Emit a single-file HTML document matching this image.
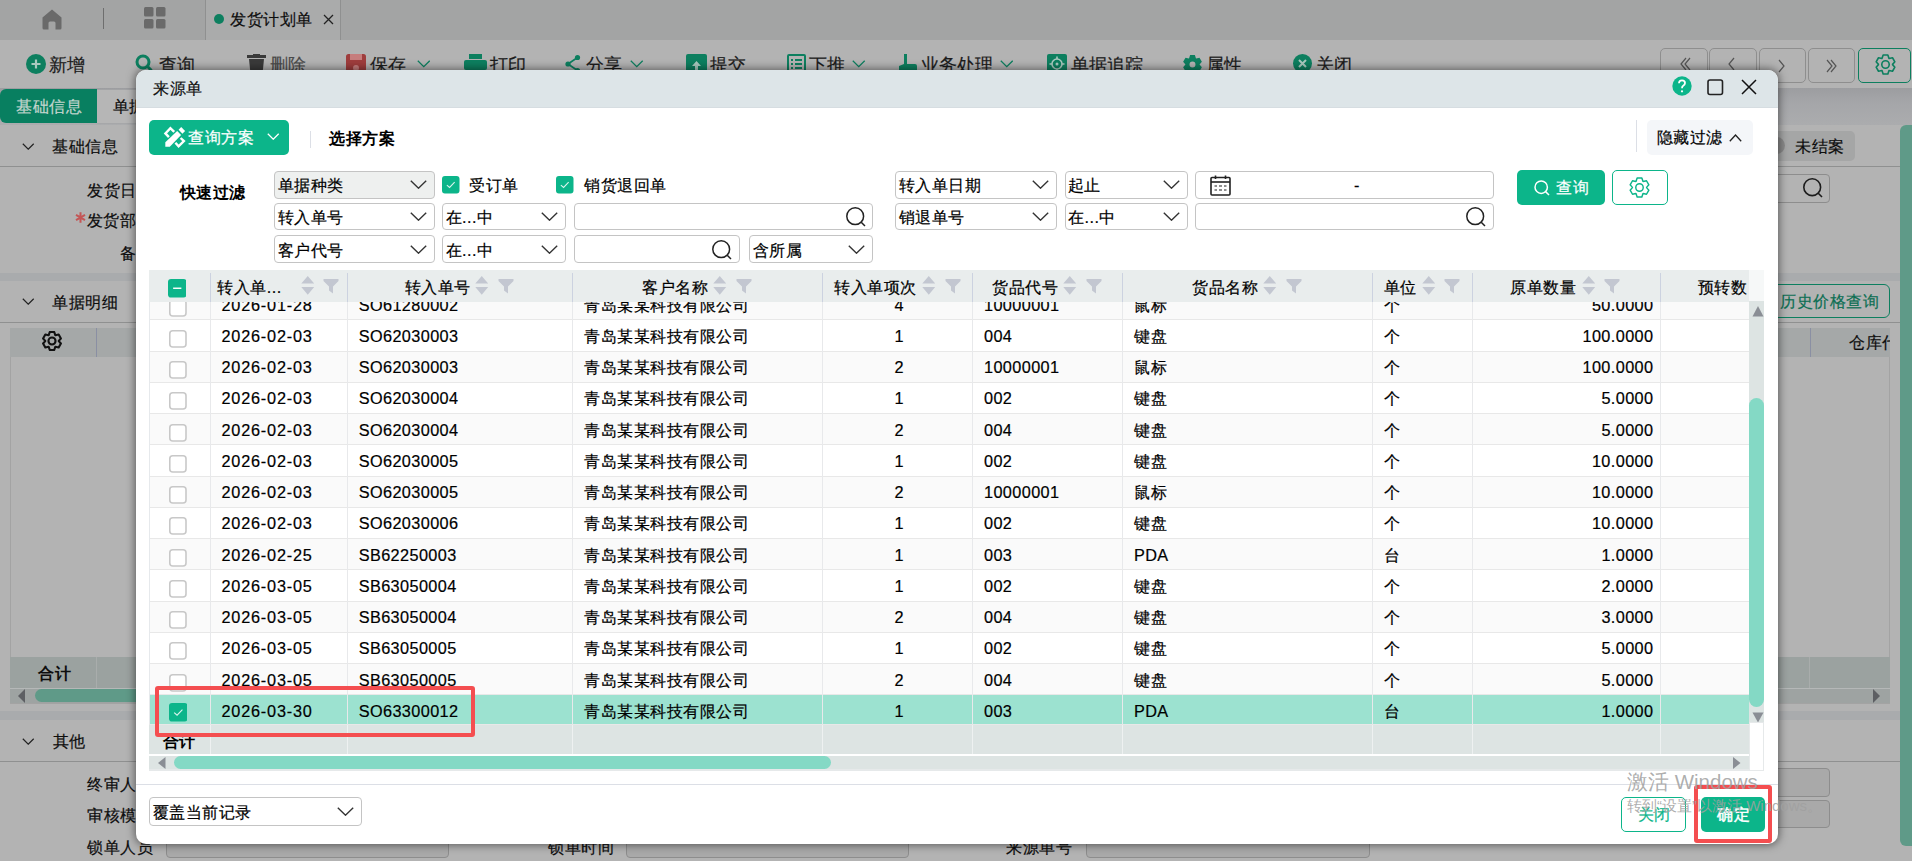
<!DOCTYPE html><html><head><meta charset="utf-8"><style>
html,body{margin:0;padding:0;}
body{width:1912px;height:861px;overflow:hidden;position:relative;background:#b3b3b3;font-family:"Liberation Sans",sans-serif;color:#000;}
.t{position:absolute;white-space:nowrap;font-size:16.25px;letter-spacing:0.5px;-webkit-text-stroke:0.2px currentColor;}
.bg .t{color:#0e0e0e;}
</style></head><body>
<div class="bg">
<div style="position:absolute;left:0px;top:0px;width:1912px;height:40px;background:#a3a4a4;"></div>
<div style="position:absolute;left:205px;top:0px;width:136px;height:40px;background:#aaabab;border-left:1px solid #8f9090;border-right:1px solid #8f9090;box-sizing:border-box;"></div>
<svg width="20" height="21" viewBox="0 0 20 21" style="position:absolute;left:42px;top:9px"><path d="M10 0.5 L19.5 8.5 L19.5 19 Q19.5 20.5 18 20.5 L13.5 20.5 L13.5 14 Q13.5 12.5 12 12.5 L8 12.5 Q6.5 12.5 6.5 14 L6.5 20.5 L2 20.5 Q0.5 20.5 0.5 19 L0.5 8.5Z" fill="#6a6a6a"/></svg>
<div style="position:absolute;left:102.5px;top:8px;width:1.2px;height:21px;background:#6e6e6e;"></div>
<svg width="22" height="22" viewBox="0 0 22 22" style="position:absolute;left:144px;top:7px"><rect x="0" y="0" width="9.5" height="9.5" rx="1.5" fill="#6a6a6a"/><rect x="12" y="0" width="9.5" height="9.5" rx="1.5" fill="#6a6a6a"/><rect x="0" y="12" width="9.5" height="9.5" rx="1.5" fill="#6a6a6a"/><rect x="12" y="12" width="9.5" height="9.5" rx="1.5" fill="#6a6a6a"/></svg>
<div style="position:absolute;left:214px;top:14px;width:10px;height:10px;border-radius:50%;background:#0d7f5f;"></div>
<div class="t" style="left:230px;top:8px;font-size:16.25px;line-height:22px;">发货计划单</div>
<svg width="11" height="11" viewBox="0 0 11 11" style="position:absolute;left:323px;top:14px"><path d="M1 1 L10 10 M10 1 L1 10" stroke="#222" stroke-width="1.3"/></svg>
<div style="position:absolute;left:0px;top:40px;width:1912px;height:48px;background:#b3b3b3;"></div>
<div class="t" style="left:48.5px;top:53.5px;font-size:17.5px;line-height:22px;letter-spacing:0;color:#1c1c1c;">新增</div>
<div class="t" style="left:158.5px;top:53.5px;font-size:17.5px;line-height:22px;letter-spacing:0;color:#1c1c1c;">查询</div>
<div class="t" style="left:269.5px;top:53.5px;font-size:17.5px;line-height:22px;letter-spacing:0;color:#4a4a4a;">删除</div>
<div class="t" style="left:369.5px;top:53.5px;font-size:17.5px;line-height:22px;letter-spacing:0;color:#1c1c1c;">保存</div>
<div class="t" style="left:490.0px;top:53.5px;font-size:17.5px;line-height:22px;letter-spacing:0;color:#1c1c1c;">打印</div>
<div class="t" style="left:586.0px;top:53.5px;font-size:17.5px;line-height:22px;letter-spacing:0;color:#1c1c1c;">分享</div>
<div class="t" style="left:709.5px;top:53.5px;font-size:17.5px;line-height:22px;letter-spacing:0;color:#1c1c1c;">提交</div>
<div class="t" style="left:809.0px;top:53.5px;font-size:17.5px;line-height:22px;letter-spacing:0;color:#1c1c1c;">下推</div>
<div class="t" style="left:921.0px;top:53.5px;font-size:17.5px;line-height:22px;letter-spacing:0;color:#1c1c1c;">业务处理</div>
<div class="t" style="left:1070.5px;top:53.5px;font-size:17.5px;line-height:22px;letter-spacing:0;color:#1c1c1c;">单据追踪</div>
<div class="t" style="left:1206.0px;top:53.5px;font-size:17.5px;line-height:22px;letter-spacing:0;color:#1c1c1c;">属性</div>
<div class="t" style="left:1315.5px;top:53.5px;font-size:17.5px;line-height:22px;letter-spacing:0;color:#1c1c1c;">关闭</div>
<svg width="13.5" height="7.5" viewBox="0 0 13.5 7.5" style="position:absolute;left:416.8px;top:60px"><path d="M0.8 0.8 L6.75 6.7 L12.7 0.8" fill="none" stroke="#0d7f5f" stroke-width="1.3"/></svg>
<svg width="13.5" height="7.5" viewBox="0 0 13.5 7.5" style="position:absolute;left:630px;top:60px"><path d="M0.8 0.8 L6.75 6.7 L12.7 0.8" fill="none" stroke="#0d7f5f" stroke-width="1.3"/></svg>
<svg width="13.5" height="7.5" viewBox="0 0 13.5 7.5" style="position:absolute;left:852px;top:60px"><path d="M0.8 0.8 L6.75 6.7 L12.7 0.8" fill="none" stroke="#0d7f5f" stroke-width="1.3"/></svg>
<svg width="13.5" height="7.5" viewBox="0 0 13.5 7.5" style="position:absolute;left:999.6px;top:60px"><path d="M0.8 0.8 L6.75 6.7 L12.7 0.8" fill="none" stroke="#0d7f5f" stroke-width="1.3"/></svg>
<div style="position:absolute;left:25.6px;top:54px;width:20px;height:20px;border-radius:50%;background:#0d7f5f;"></div>
<svg width="20" height="20" style="position:absolute;left:25.6px;top:54px"><path d="M10 5.5 V14.5 M5.5 10 H14.5" stroke="#a9c9bf" stroke-width="2.2"/></svg>
<svg width="18" height="20" style="position:absolute;left:135px;top:54px"><circle cx="8" cy="8" r="6" fill="none" stroke="#0d7f5f" stroke-width="3"/><path d="M12 12 L16.5 16.5" stroke="#0d7f5f" stroke-width="3"/></svg>
<svg width="19" height="20" style="position:absolute;left:246.5px;top:54px"><rect x="0" y="1" width="19" height="3" fill="#3a3a3a"/><rect x="6" y="0" width="7" height="2" fill="#3a3a3a"/><path d="M2 5 H17 L15.5 20 H3.5Z" fill="#3a3a3a"/></svg>
<svg width="20" height="20" style="position:absolute;left:345.7px;top:54px"><rect x="0" y="0" width="20" height="20" rx="2.5" fill="#9f3d3d"/><rect x="4" y="0" width="12" height="6" fill="#c67d7d"/><circle cx="10" cy="14" r="3" fill="#c67d7d"/></svg>
<svg width="23" height="20" style="position:absolute;left:464px;top:54px"><rect x="5" y="0" width="13" height="5" fill="#0d7f5f"/><rect x="0" y="6" width="23" height="10" rx="2" fill="#0d7f5f"/><rect x="5" y="12" width="13" height="8" fill="#0d7f5f"/></svg>
<svg width="16" height="20" style="position:absolute;left:565px;top:54px"><circle cx="3" cy="10" r="2.6" fill="#0d7f5f"/><circle cx="12.5" cy="3.5" r="2.6" fill="#0d7f5f"/><circle cx="12.5" cy="16.5" r="2.6" fill="#0d7f5f"/><path d="M3 10 L12.5 3.5 M3 10 L12.5 16.5" stroke="#0d7f5f" stroke-width="1.6"/></svg>
<svg width="21" height="20" style="position:absolute;left:685.5px;top:54px"><rect x="0" y="0" width="21" height="20" rx="2" fill="#0d7f5f"/><path d="M10.5 7 L15 12 H12 V17 H9 V12 H6Z" fill="#a9c9bf"/></svg>
<svg width="19" height="20" style="position:absolute;left:787px;top:54px"><rect x="1" y="1" width="17" height="18" rx="1" fill="none" stroke="#0d7f5f" stroke-width="2"/><path d="M4 6 H6 M8 6 H15 M4 10 H6 M8 10 H15 M4 14 H6 M8 14 H15" stroke="#0d7f5f" stroke-width="1.8"/></svg>
<svg width="18" height="20" style="position:absolute;left:899px;top:54px"><path d="M5 0 H8 V10 H16 Q18 10 18 12 V20 H2 Q0 20 0 18 V12 L5 10Z" fill="#0d7f5f"/></svg>
<svg width="20" height="20" style="position:absolute;left:1046.7px;top:54px"><rect x="0" y="0" width="20" height="20" rx="2" fill="#0d7f5f"/><circle cx="10" cy="10" r="5" fill="none" stroke="#a9c9bf" stroke-width="1.6"/><circle cx="10" cy="10" r="1.5" fill="#a9c9bf"/><path d="M10 2.5 V5 M10 15 V17.5 M2.5 10 H5 M15 10 H17.5" stroke="#a9c9bf" stroke-width="1.6"/></svg>
<svg width="21" height="21" viewBox="0 0 21 21" style="position:absolute;left:1181.5px;top:53.5px"><path d="M7.08 4.32 L8.14 1.05 L12.86 1.05 L13.92 4.32 L14.14 4.45 L17.50 3.74 L19.86 7.82 L17.56 10.38 L17.56 10.62 L19.86 13.18 L17.50 17.26 L14.14 16.55 L13.92 16.68 L12.86 19.95 L8.14 19.95 L7.08 16.68 L6.86 16.55 L3.50 17.26 L1.14 13.18 L3.44 10.62 L3.44 10.38 L1.14 7.82 L3.50 3.74 L6.86 4.45Z M13.48 10.50 A2.98 2.98 0 1 0 7.52 10.50 A2.98 2.98 0 1 0 13.48 10.50Z" fill="#0d7f5f" fill-rule="evenodd"/></svg>
<div style="position:absolute;left:1292.5px;top:54px;width:19px;height:19px;border-radius:50%;background:#0d7f5f;"></div>
<svg width="19" height="19" style="position:absolute;left:1292.5px;top:54px"><path d="M6 6 L13 13 M13 6 L6 13" stroke="#a9c9bf" stroke-width="2"/></svg>
<div style="position:absolute;left:1660.3px;top:48.3px;width:47.299999999999955px;height:34.3px;box-sizing:border-box;border:1px solid #8e8e8e;border-radius:5px;"></div>
<div style="position:absolute;left:1709.4px;top:48.3px;width:47.299999999999955px;height:34.3px;box-sizing:border-box;border:1px solid #8e8e8e;border-radius:5px;"></div>
<div style="position:absolute;left:1759.2px;top:48.3px;width:47.200000000000045px;height:34.3px;box-sizing:border-box;border:1px solid #8e8e8e;border-radius:5px;"></div>
<div style="position:absolute;left:1808.3px;top:48.3px;width:47.200000000000045px;height:34.3px;box-sizing:border-box;border:1px solid #8e8e8e;border-radius:5px;"></div>
<div style="position:absolute;left:1858px;top:48.3px;width:53.4px;height:34.3px;box-sizing:border-box;border:1.5px solid #0d7f5f;border-radius:5px;"></div>
<svg width="21" height="21" viewBox="0 0 21 21" style="position:absolute;left:1875px;top:54px"><path d="M7.08 4.32 L8.14 1.05 L12.86 1.05 L13.92 4.32 L14.14 4.45 L17.50 3.74 L19.86 7.82 L17.56 10.38 L17.56 10.62 L19.86 13.18 L17.50 17.26 L14.14 16.55 L13.92 16.68 L12.86 19.95 L8.14 19.95 L7.08 16.68 L6.86 16.55 L3.50 17.26 L1.14 13.18 L3.44 10.62 L3.44 10.38 L1.14 7.82 L3.50 3.74 L6.86 4.45Z" fill="none" stroke="#0d7f5f" stroke-width="1.6" stroke-linejoin="round"/><circle cx="10.5" cy="10.5" r="3.7227272727272727" fill="none" stroke="#0d7f5f" stroke-width="1.6"/></svg>
<svg width="200" height="30" style="position:absolute;left:1658.5px;top:48px"><path d="M27 10 L22 16 L27 22 M31 10 L26 16 L31 22" fill="none" stroke="#555" stroke-width="1.2"/><path d="M75 10 L70 16 L75 22" fill="none" stroke="#555" stroke-width="1.2"/><path d="M120 12 L125 18 L120 24" fill="none" stroke="#555" stroke-width="1.2"/><path d="M168 12 L173 18 L168 24 M172 12 L177 18 L172 24" fill="none" stroke="#555" stroke-width="1.2"/></svg>
<div style="position:absolute;left:0px;top:87.5px;width:1912px;height:37.3px;background:linear-gradient(#9c9da0,#a5a6a9 40%,#abacae);"></div>
<div style="position:absolute;left:97px;top:88.5px;width:120px;height:35px;background:#b6b6b6;border-top:1.5px solid #a2a3a5;border-bottom:1.5px solid #a6a7a9;box-sizing:border-box;"></div>
<div style="position:absolute;left:0px;top:88.5px;width:97px;height:34.5px;background:#087f60;border-radius:6px 0 0 6px;"></div>
<div class="t" style="left:16.3px;top:94px;color:#c2d5ce;line-height:24px;">基础信息</div>
<div class="t" style="left:112.8px;top:94px;line-height:24px;">单据</div>
<svg width="12.5" height="7" viewBox="0 0 12.5 7" style="position:absolute;left:22px;top:142.7px"><path d="M0.8 0.8 L6.25 6.2 L11.7 0.8" fill="none" stroke="#222" stroke-width="1.2"/></svg>
<div class="t" style="left:52px;top:134px;line-height:24px;">基础信息</div>
<div style="position:absolute;left:0px;top:165.5px;width:1912px;height:1px;background:#8f9090;"></div>
<div class="t" style="left:87px;top:178px;line-height:24px;">发货日</div>
<svg width="11" height="11" viewBox="0 0 11 11" style="position:absolute;left:74.5px;top:211.5px"><path d="M5.5 0.3 V10.7 M1 2.9 L10 8.1 M10 2.9 L1 8.1" stroke="#c45656" stroke-width="2"/></svg>
<div class="t" style="left:86.8px;top:207.5px;line-height:24px;">发货部</div>
<div class="t" style="left:119.5px;top:241px;line-height:24px;">备注</div>
<div style="position:absolute;left:0px;top:272.8px;width:1912px;height:8px;background:#a9abad;"></div>
<svg width="12.5" height="7" viewBox="0 0 12.5 7" style="position:absolute;left:22px;top:298px"><path d="M0.8 0.8 L6.25 6.2 L11.7 0.8" fill="none" stroke="#222" stroke-width="1.2"/></svg>
<div class="t" style="left:52px;top:290px;line-height:24px;">单据明细</div>
<div style="position:absolute;left:0px;top:322px;width:1912px;height:1px;background:#8f9090;"></div>
<div style="position:absolute;left:10.3px;top:327.5px;width:1879.3px;height:376px;box-sizing:border-box;border:1px solid #a3a3a3;background:#b3b3b3;"></div>
<div style="position:absolute;left:10.3px;top:327.5px;width:1879.3px;height:29.5px;background:#a5a8a8;"></div>
<svg width="20" height="20" viewBox="0 0 20 20" style="position:absolute;left:41.7px;top:330.5px"><path d="M6.74 4.12 L7.76 1.00 L12.24 1.00 L13.26 4.12 L13.46 4.23 L16.67 3.56 L18.91 7.44 L16.73 9.88 L16.73 10.12 L18.91 12.56 L16.67 16.44 L13.46 15.77 L13.26 15.88 L12.24 19.00 L7.76 19.00 L6.74 15.88 L6.54 15.77 L3.33 16.44 L1.09 12.56 L3.27 10.12 L3.27 9.88 L1.09 7.44 L3.33 3.56 L6.54 4.23Z" fill="none" stroke="#111" stroke-width="2.1" stroke-linejoin="round"/><circle cx="10.0" cy="10.0" r="3.5454545454545454" fill="none" stroke="#111" stroke-width="2.1"/></svg>
<div style="position:absolute;left:96px;top:328px;width:1px;height:29px;background:#8a8fa3;"></div>
<div style="position:absolute;left:10.3px;top:657px;width:1879.3px;height:31px;background:#9ba2a0;"></div>
<div class="t" style="left:38px;top:661px;font-weight:bold;line-height:24px;-webkit-text-stroke:0;">合计</div>
<div style="position:absolute;left:96px;top:657px;width:1px;height:31px;background:#a9adac;"></div>
<div style="position:absolute;left:1808.6px;top:657px;width:1px;height:31px;background:#a9adac;"></div>
<div style="position:absolute;left:10.3px;top:688px;width:1879.3px;height:1px;background:#b5b8b8;"></div>
<div style="position:absolute;left:10.3px;top:689px;width:1879.3px;height:14px;background:#9ea3a2;"></div>
<svg width="10" height="14" style="position:absolute;left:17px;top:689px"><path d="M8 0 L1 7 L8 14Z" fill="#5d5f63"/></svg>
<div style="position:absolute;left:35px;top:689px;width:1735px;height:13px;background:#5f9a88;border-radius:7px;"></div>
<svg width="10" height="14" style="position:absolute;left:1872px;top:689px"><path d="M1 0 L8 7 L1 14Z" fill="#5d5f63"/></svg>
<div style="position:absolute;left:0px;top:711px;width:1912px;height:8.5px;background:#a9abad;"></div>
<svg width="12.5" height="7" viewBox="0 0 12.5 7" style="position:absolute;left:22px;top:738px"><path d="M0.8 0.8 L6.25 6.2 L11.7 0.8" fill="none" stroke="#222" stroke-width="1.2"/></svg>
<div class="t" style="left:52.7px;top:729px;line-height:24px;">其他</div>
<div style="position:absolute;left:0px;top:760.5px;width:1912px;height:1px;background:#8f9090;"></div>
<div class="t" style="left:87px;top:772px;line-height:24px;">终审人</div>
<div class="t" style="left:87px;top:803px;line-height:24px;">审核模式</div>
<div class="t" style="left:87.3px;top:835px;line-height:24px;">锁单人员</div>
<div style="position:absolute;left:165.6px;top:829px;width:283.4px;height:29px;box-sizing:border-box;border:1px solid #8d8d8d;border-radius:4px;background:#a9a9a9;"></div>
<div class="t" style="left:548px;top:835px;line-height:24px;">锁单时间</div>
<div style="position:absolute;left:625.8px;top:829px;width:283.5px;height:29px;box-sizing:border-box;border:1px solid #8d8d8d;border-radius:4px;background:#a9a9a9;"></div>
<div class="t" style="left:1006px;top:835px;line-height:24px;">来源单号</div>
<div style="position:absolute;left:1086px;top:829px;width:283.5px;height:29px;box-sizing:border-box;border:1px solid #8d8d8d;border-radius:4px;background:#a9a9a9;"></div>
<div style="position:absolute;left:1700px;top:768px;width:130px;height:29px;box-sizing:border-box;border:1px solid #8d8d8d;border-radius:4px;background:#a9a9a9;"></div>
<div style="position:absolute;left:1700px;top:800px;width:130px;height:28px;box-sizing:border-box;border:1px solid #8d8d8d;border-radius:4px;background:#a9a9a9;"></div>
<div style="position:absolute;left:1755px;top:131px;width:100px;height:30px;background:#a5a6a6;border-radius:5px;"></div>
<div style="position:absolute;left:1768px;top:137px;width:17px;height:17px;border-radius:50%;background:#8a8a8a;"></div>
<div class="t" style="left:1795px;top:134px;line-height:24px;">未结案</div>
<div style="position:absolute;left:1700px;top:174px;width:129.5px;height:28.5px;box-sizing:border-box;border:1px solid #8d8d8d;border-radius:4px;"></div>
<svg width="20" height="20" viewBox="0 0 20 20" style="position:absolute;left:1802.5px;top:178px"><circle cx="9.200000000000001" cy="9.200000000000001" r="8.4" fill="none" stroke="#1c1c1c" stroke-width="1.6"/><path d="M15.248000000000001 15.248000000000001 L19 19" stroke="#1c1c1c" stroke-width="1.6"/></svg>
<div style="position:absolute;left:1750px;top:284.3px;width:139.6px;height:33.4px;box-sizing:border-box;border:1.5px solid #0d7f5f;border-radius:6px;"></div>
<div class="t" style="left:1780px;top:289px;line-height:24px;color:#0d6f53;">历史价格查询</div>
<div style="position:absolute;left:1809.6px;top:328px;width:1px;height:29px;background:#8a8fa3;"></div>
<div style="position:absolute;left:1700px;top:327.5px;width:189.6px;height:30px;overflow:hidden;"><div class="t" style="left:149px;top:2.5px;line-height:24px;">仓库代号</div></div>
<div style="position:absolute;left:1900px;top:124.5px;width:12px;height:721px;background:#5f9a88;border-radius:6px 0 0 6px;"></div>
</div>
<div style="position:absolute;left:136px;top:70px;width:1642px;height:774px;background:#fff;border-radius:10px;box-shadow:0 0 9px 1px rgba(0,0,0,0.5);overflow:hidden;"></div>
<div style="position:absolute;left:136px;top:70px;width:1642px;height:38px;background:#dde5e8;border-radius:10px 10px 0 0;"></div>
<div class="t" style="left:153px;top:77px;line-height:22px;color:#111;">来源单</div>
<div style="position:absolute;left:136px;top:107px;width:1642px;height:1px;background:#d6dde1;"></div>
<svg width="20" height="20" viewBox="0 0 20 20" style="position:absolute;left:1671.8px;top:76.3px"><circle cx="10" cy="10" r="9.7" fill="#0cb58a"/><path d="M7 7.3 Q7 4.3 10 4.3 Q13 4.3 13 7.1 Q13 8.8 11.2 9.7 Q10 10.4 10 12.3" fill="none" stroke="#fff" stroke-width="1.8"/><circle cx="10" cy="15.3" r="1.1" fill="#fff"/></svg>
<svg width="17" height="17" viewBox="0 0 17 17" style="position:absolute;left:1706.5px;top:78.7px"><rect x="1" y="1" width="14.5" height="14.5" rx="2" fill="none" stroke="#222" stroke-width="1.6"/></svg>
<svg width="16" height="16" viewBox="0 0 16 16" style="position:absolute;left:1741px;top:79px"><path d="M1 1 L15 15 M15 1 L1 15" stroke="#111" stroke-width="1.5"/></svg>
<div style="position:absolute;left:149.1px;top:120.1px;width:139.8px;height:34.5px;background:#0cb58a;border-radius:5px;"></div>
<svg width="45" height="35" viewBox="0 0 45 35" style="position:absolute;left:155px;top:120px"><path d="M10.3 22.2 L22.2 10.9 L26.1 14.9 L14.8 26.7 L10.3 26.7Z" fill="#fff"/><path d="M23.6 9.8 L26.2 7.1 L30.1 11 L27.4 13.7Z" fill="#fff"/><path d="M19.2 11.9 L15.4 8.1 L10.4 13.4 L13.9 17.1" fill="none" stroke="#fff" stroke-width="2.4"/><path d="M20.4 22.7 L23.6 26.3 L28.9 21.1 L25.6 18" fill="none" stroke="#fff" stroke-width="2.4"/></svg>
<div class="t" style="left:188px;top:126px;line-height:22px;color:#fff;">查询方案</div>
<svg width="12.5" height="7" viewBox="0 0 12.5 7" style="position:absolute;left:267px;top:133px"><path d="M0.8 0.8 L6.25 6.2 L11.7 0.8" fill="none" stroke="#fff" stroke-width="1.3"/></svg>
<div style="position:absolute;left:310px;top:131px;width:1px;height:16.5px;background:#dcdfe6;"></div>
<div class="t" style="left:329.2px;top:127px;line-height:22px;font-weight:bold;-webkit-text-stroke:0;">选择方案</div>
<div style="position:absolute;left:1635.5px;top:120px;width:1.2px;height:32px;background:#dcdfe6;"></div>
<div style="position:absolute;left:1647.3px;top:120.3px;width:105.5px;height:34.5px;background:#f4f6f9;border-radius:5px;"></div>
<div class="t" style="left:1656.5px;top:126px;line-height:22px;">隐藏过滤</div>
<svg width="13" height="8" viewBox="0 0 13 8" style="position:absolute;left:1729px;top:133.5px"><path d="M0.8 7.2 L6.5 1 L12.2 7.2" fill="none" stroke="#222" stroke-width="1.3"/></svg>
<div class="t" style="left:179.5px;top:181px;line-height:22px;font-weight:bold;-webkit-text-stroke:0;">快速过滤</div>
<div style="position:absolute;left:274.3px;top:170.5px;width:161.2px;height:28.0px;box-sizing:border-box;border:1px solid #c4c4c4;border-radius:4px;background:#eef0ef;"></div><div class="t" style="left:277.6px;top:171.2px;line-height:28.0px;font-size:16.25px;">单据种类</div><svg width="17" height="9" viewBox="0 0 17 9" style="position:absolute;left:410.3px;top:180.0px"><path d="M0.8 0.8 L8.5 8.2 L16.2 0.8" fill="none" stroke="#333" stroke-width="1.4"/></svg>
<svg width="17.5" height="17.5" viewBox="0 0 18 18" style="position:absolute;left:442.3px;top:176.2px"><rect x="0" y="0" width="18" height="18" rx="3" fill="#0cb58a"/><path d="M5 9.3 L7.8 11.8 L13 6.4" fill="none" stroke="rgba(255,255,255,0.85)" stroke-width="1.1"/></svg>
<div class="t" style="left:469.4px;top:170.5px;line-height:28.0px;">受订单</div>
<svg width="17.5" height="17.5" viewBox="0 0 18 18" style="position:absolute;left:556.3px;top:176.2px"><rect x="0" y="0" width="18" height="18" rx="3" fill="#0cb58a"/><path d="M5 9.3 L7.8 11.8 L13 6.4" fill="none" stroke="rgba(255,255,255,0.85)" stroke-width="1.1"/></svg>
<div class="t" style="left:584px;top:170.5px;line-height:28.0px;">销货退回单</div>
<div style="position:absolute;left:274.3px;top:203.3px;width:161.2px;height:27.19999999999999px;box-sizing:border-box;border:1px solid #c4c4c4;border-radius:4px;background:#fff;"></div><div class="t" style="left:277.6px;top:204.0px;line-height:27.19999999999999px;font-size:16.25px;">转入单号</div><svg width="17" height="9" viewBox="0 0 17 9" style="position:absolute;left:410.3px;top:212.4px"><path d="M0.8 0.8 L8.5 8.2 L16.2 0.8" fill="none" stroke="#333" stroke-width="1.4"/></svg>
<div style="position:absolute;left:442.3px;top:203.3px;width:123.99999999999994px;height:27.19999999999999px;box-sizing:border-box;border:1px solid #c4c4c4;border-radius:4px;background:#fff;"></div><div class="t" style="left:445.6px;top:204.0px;line-height:27.19999999999999px;font-size:16.25px;">在...中</div><svg width="17" height="9" viewBox="0 0 17 9" style="position:absolute;left:541.0999999999999px;top:212.4px"><path d="M0.8 0.8 L8.5 8.2 L16.2 0.8" fill="none" stroke="#333" stroke-width="1.4"/></svg>
<div style="position:absolute;left:574.3px;top:203.3px;width:299.20000000000005px;height:27.19999999999999px;box-sizing:border-box;border:1px solid #c4c4c4;border-radius:4px;background:#fff;"></div><svg width="20" height="20" viewBox="0 0 20 20" style="position:absolute;left:845.5px;top:207.4px"><circle cx="9.200000000000001" cy="9.200000000000001" r="8.4" fill="none" stroke="#222" stroke-width="1.5"/><path d="M15.248000000000001 15.248000000000001 L19 19" stroke="#222" stroke-width="1.5"/></svg>
<div style="position:absolute;left:274.3px;top:235.3px;width:161.2px;height:28.0px;box-sizing:border-box;border:1px solid #c4c4c4;border-radius:4px;background:#fff;"></div><div class="t" style="left:277.6px;top:236.0px;line-height:28.0px;font-size:16.25px;">客户代号</div><svg width="17" height="9" viewBox="0 0 17 9" style="position:absolute;left:410.3px;top:244.8px"><path d="M0.8 0.8 L8.5 8.2 L16.2 0.8" fill="none" stroke="#333" stroke-width="1.4"/></svg>
<div style="position:absolute;left:442.3px;top:235.3px;width:123.99999999999994px;height:28.0px;box-sizing:border-box;border:1px solid #c4c4c4;border-radius:4px;background:#fff;"></div><div class="t" style="left:445.6px;top:236.0px;line-height:28.0px;font-size:16.25px;">在...中</div><svg width="17" height="9" viewBox="0 0 17 9" style="position:absolute;left:541.0999999999999px;top:244.8px"><path d="M0.8 0.8 L8.5 8.2 L16.2 0.8" fill="none" stroke="#333" stroke-width="1.4"/></svg>
<div style="position:absolute;left:574.3px;top:235.3px;width:165.9000000000001px;height:28.0px;box-sizing:border-box;border:1px solid #c4c4c4;border-radius:4px;background:#fff;"></div><svg width="20" height="20" viewBox="0 0 20 20" style="position:absolute;left:712.2px;top:239.8px"><circle cx="9.200000000000001" cy="9.200000000000001" r="8.4" fill="none" stroke="#222" stroke-width="1.5"/><path d="M15.248000000000001 15.248000000000001 L19 19" stroke="#222" stroke-width="1.5"/></svg>
<div style="position:absolute;left:749.4px;top:235.3px;width:124.10000000000002px;height:28.0px;box-sizing:border-box;border:1px solid #c4c4c4;border-radius:4px;background:#fff;"></div><div class="t" style="left:752.6999999999999px;top:236.0px;line-height:28.0px;font-size:16.25px;">含所属</div><svg width="17" height="9" viewBox="0 0 17 9" style="position:absolute;left:848.3px;top:244.8px"><path d="M0.8 0.8 L8.5 8.2 L16.2 0.8" fill="none" stroke="#333" stroke-width="1.4"/></svg>
<div style="position:absolute;left:895.4px;top:170.5px;width:161.80000000000007px;height:28.0px;box-sizing:border-box;border:1px solid #c4c4c4;border-radius:4px;background:#fff;"></div><div class="t" style="left:898.6999999999999px;top:171.2px;line-height:28.0px;font-size:16.25px;">转入单日期</div><svg width="17" height="9" viewBox="0 0 17 9" style="position:absolute;left:1032.0px;top:180.0px"><path d="M0.8 0.8 L8.5 8.2 L16.2 0.8" fill="none" stroke="#333" stroke-width="1.4"/></svg>
<div style="position:absolute;left:1064.6px;top:170.5px;width:123.80000000000018px;height:28.0px;box-sizing:border-box;border:1px solid #c4c4c4;border-radius:4px;background:#fff;"></div><div class="t" style="left:1067.8999999999999px;top:171.2px;line-height:28.0px;font-size:16.25px;">起止</div><svg width="17" height="9" viewBox="0 0 17 9" style="position:absolute;left:1163.2px;top:180.0px"><path d="M0.8 0.8 L8.5 8.2 L16.2 0.8" fill="none" stroke="#333" stroke-width="1.4"/></svg>
<div style="position:absolute;left:1195.3px;top:170.5px;width:299px;height:28px;box-sizing:border-box;border:1px solid #c4c4c4;border-radius:4px;background:#fff;"></div>
<svg width="21" height="21" viewBox="0 0 21 21" style="position:absolute;left:1209.6px;top:175px"><rect x="1" y="2.5" width="19" height="17.5" rx="1" fill="none" stroke="#222" stroke-width="1.6"/><path d="M1 7 H20" stroke="#222" stroke-width="1.6"/><path d="M5.5 0.5 V4 M15.5 0.5 V4" stroke="#222" stroke-width="1.6"/><path d="M4.5 11 H7 M9 11 H12 M14 11 H16.5 M4.5 15 H7 M9 15 H12 M14 15 H16.5" stroke="#222" stroke-width="1.2"/></svg>
<div class="t" style="left:1354px;top:170.5px;line-height:28.0px;">-</div>
<div style="position:absolute;left:895.4px;top:203.3px;width:161.80000000000007px;height:27.19999999999999px;box-sizing:border-box;border:1px solid #c4c4c4;border-radius:4px;background:#fff;"></div><div class="t" style="left:898.6999999999999px;top:204.0px;line-height:27.19999999999999px;font-size:16.25px;">销退单号</div><svg width="17" height="9" viewBox="0 0 17 9" style="position:absolute;left:1032.0px;top:212.4px"><path d="M0.8 0.8 L8.5 8.2 L16.2 0.8" fill="none" stroke="#333" stroke-width="1.4"/></svg>
<div style="position:absolute;left:1064.6px;top:203.3px;width:123.80000000000018px;height:27.19999999999999px;box-sizing:border-box;border:1px solid #c4c4c4;border-radius:4px;background:#fff;"></div><div class="t" style="left:1067.8999999999999px;top:204.0px;line-height:27.19999999999999px;font-size:16.25px;">在...中</div><svg width="17" height="9" viewBox="0 0 17 9" style="position:absolute;left:1163.2px;top:212.4px"><path d="M0.8 0.8 L8.5 8.2 L16.2 0.8" fill="none" stroke="#333" stroke-width="1.4"/></svg>
<div style="position:absolute;left:1195.3px;top:203.3px;width:299.0px;height:27.19999999999999px;box-sizing:border-box;border:1px solid #c4c4c4;border-radius:4px;background:#fff;"></div><svg width="20" height="20" viewBox="0 0 20 20" style="position:absolute;left:1466.3px;top:207.4px"><circle cx="9.200000000000001" cy="9.200000000000001" r="8.4" fill="none" stroke="#222" stroke-width="1.5"/><path d="M15.248000000000001 15.248000000000001 L19 19" stroke="#222" stroke-width="1.5"/></svg>
<div style="position:absolute;left:1517px;top:170.2px;width:88px;height:34.6px;background:#0cb58a;border-radius:5px;"></div>
<svg width="16" height="16" viewBox="0 0 16 16" style="position:absolute;left:1533.5px;top:179.5px"><circle cx="7.2" cy="7.2" r="6.2" fill="none" stroke="#fff" stroke-width="1.5"/><path d="M11.6 11.6 L15 15" stroke="#fff" stroke-width="1.5"/></svg>
<div class="t" style="left:1556px;top:176px;line-height:22px;color:#fff;">查询</div>
<div style="position:absolute;left:1612.1px;top:170.2px;width:55.7px;height:34.6px;box-sizing:border-box;border:1px solid #0cb58a;border-radius:5px;background:#fff;"></div>
<svg width="21" height="21" viewBox="0 0 21 21" style="position:absolute;left:1629.3px;top:177px"><path d="M7.08 4.32 L8.14 1.05 L12.86 1.05 L13.92 4.32 L14.14 4.45 L17.50 3.74 L19.86 7.82 L17.56 10.38 L17.56 10.62 L19.86 13.18 L17.50 17.26 L14.14 16.55 L13.92 16.68 L12.86 19.95 L8.14 19.95 L7.08 16.68 L6.86 16.55 L3.50 17.26 L1.14 13.18 L3.44 10.62 L3.44 10.38 L1.14 7.82 L3.50 3.74 L6.86 4.45Z" fill="none" stroke="#0cb58a" stroke-width="1.45" stroke-linejoin="round"/><circle cx="10.5" cy="10.5" r="3.7227272727272727" fill="none" stroke="#0cb58a" stroke-width="1.45"/></svg>
<div style="position:absolute;left:149.3px;top:270.2px;width:1615.1000000000001px;height:500.59999999999997px;overflow:hidden;">
<div style="position:absolute;left:0px;top:18.85px;width:1599.4px;height:31.25px;background:#fafafa;box-sizing:border-box;border-bottom:1px solid #e8e8e8;"></div>
<div style="position:absolute;left:60.7px;top:18.85px;width:1px;height:31.25px;background:#e8e9eb;"></div>
<div style="position:absolute;left:197.7px;top:18.85px;width:1px;height:31.25px;background:#e8e9eb;"></div>
<div style="position:absolute;left:422.7px;top:18.85px;width:1px;height:31.25px;background:#e8e9eb;"></div>
<div style="position:absolute;left:672.7px;top:18.85px;width:1px;height:31.25px;background:#e8e9eb;"></div>
<div style="position:absolute;left:822.7px;top:18.85px;width:1px;height:31.25px;background:#e8e9eb;"></div>
<div style="position:absolute;left:972.7px;top:18.85px;width:1px;height:31.25px;background:#e8e9eb;"></div>
<div style="position:absolute;left:1222.7px;top:18.85px;width:1px;height:31.25px;background:#e8e9eb;"></div>
<div style="position:absolute;left:1322.7px;top:18.85px;width:1px;height:31.25px;background:#e8e9eb;"></div>
<div style="position:absolute;left:1510.7px;top:18.85px;width:1px;height:31.25px;background:#e8e9eb;"></div>
<svg width="17.8" height="17.8" viewBox="0 0 18 18" style="position:absolute;left:19.9px;top:28.55px"><rect x="0.8" y="0.8" width="16.4" height="16.4" rx="3" fill="#fff" stroke="#c8c8c8" stroke-width="1.6"/></svg>
<div class="t" style="left:72.2px;top:22.55px;line-height:24px;letter-spacing:0.8px;">2026-01-28</div>
<div class="t" style="left:209.4px;top:22.55px;line-height:24px;letter-spacing:0.4px;">SO61280002</div>
<div class="t" style="left:434.7px;top:22.55px;line-height:24px;letter-spacing:0.55px;">青岛某某科技有限公司</div>
<div class="t" style="left:674.9px;top:22.55px;width:150px;text-align:center;line-height:24px;">4</div>
<div class="t" style="left:834.7px;top:22.55px;line-height:24px;letter-spacing:0.4px;">10000001</div>
<div class="t" style="left:984.7px;top:22.55px;line-height:24px;letter-spacing:0.55px;">鼠标</div>
<div class="t" style="left:1234.7px;top:22.55px;line-height:24px;">个</div>
<div class="t" style="left:1323.2px;top:22.55px;width:181px;text-align:right;line-height:24px;letter-spacing:0.4px;">50.0000</div>
<div style="position:absolute;left:0px;top:50.1px;width:1599.4px;height:31.25px;background:#ffffff;box-sizing:border-box;border-bottom:1px solid #e8e8e8;"></div>
<div style="position:absolute;left:60.7px;top:50.1px;width:1px;height:31.25px;background:#e8e9eb;"></div>
<div style="position:absolute;left:197.7px;top:50.1px;width:1px;height:31.25px;background:#e8e9eb;"></div>
<div style="position:absolute;left:422.7px;top:50.1px;width:1px;height:31.25px;background:#e8e9eb;"></div>
<div style="position:absolute;left:672.7px;top:50.1px;width:1px;height:31.25px;background:#e8e9eb;"></div>
<div style="position:absolute;left:822.7px;top:50.1px;width:1px;height:31.25px;background:#e8e9eb;"></div>
<div style="position:absolute;left:972.7px;top:50.1px;width:1px;height:31.25px;background:#e8e9eb;"></div>
<div style="position:absolute;left:1222.7px;top:50.1px;width:1px;height:31.25px;background:#e8e9eb;"></div>
<div style="position:absolute;left:1322.7px;top:50.1px;width:1px;height:31.25px;background:#e8e9eb;"></div>
<div style="position:absolute;left:1510.7px;top:50.1px;width:1px;height:31.25px;background:#e8e9eb;"></div>
<svg width="17.8" height="17.8" viewBox="0 0 18 18" style="position:absolute;left:19.9px;top:59.8px"><rect x="0.8" y="0.8" width="16.4" height="16.4" rx="3" fill="#fff" stroke="#c8c8c8" stroke-width="1.6"/></svg>
<div class="t" style="left:72.2px;top:53.8px;line-height:24px;letter-spacing:0.8px;">2026-02-03</div>
<div class="t" style="left:209.4px;top:53.8px;line-height:24px;letter-spacing:0.4px;">SO62030003</div>
<div class="t" style="left:434.7px;top:53.8px;line-height:24px;letter-spacing:0.55px;">青岛某某科技有限公司</div>
<div class="t" style="left:674.9px;top:53.8px;width:150px;text-align:center;line-height:24px;">1</div>
<div class="t" style="left:834.7px;top:53.8px;line-height:24px;letter-spacing:0.4px;">004</div>
<div class="t" style="left:984.7px;top:53.8px;line-height:24px;letter-spacing:0.55px;">键盘</div>
<div class="t" style="left:1234.7px;top:53.8px;line-height:24px;">个</div>
<div class="t" style="left:1323.2px;top:53.8px;width:181px;text-align:right;line-height:24px;letter-spacing:0.4px;">100.0000</div>
<div style="position:absolute;left:0px;top:81.35px;width:1599.4px;height:31.25px;background:#fafafa;box-sizing:border-box;border-bottom:1px solid #e8e8e8;"></div>
<div style="position:absolute;left:60.7px;top:81.35px;width:1px;height:31.25px;background:#e8e9eb;"></div>
<div style="position:absolute;left:197.7px;top:81.35px;width:1px;height:31.25px;background:#e8e9eb;"></div>
<div style="position:absolute;left:422.7px;top:81.35px;width:1px;height:31.25px;background:#e8e9eb;"></div>
<div style="position:absolute;left:672.7px;top:81.35px;width:1px;height:31.25px;background:#e8e9eb;"></div>
<div style="position:absolute;left:822.7px;top:81.35px;width:1px;height:31.25px;background:#e8e9eb;"></div>
<div style="position:absolute;left:972.7px;top:81.35px;width:1px;height:31.25px;background:#e8e9eb;"></div>
<div style="position:absolute;left:1222.7px;top:81.35px;width:1px;height:31.25px;background:#e8e9eb;"></div>
<div style="position:absolute;left:1322.7px;top:81.35px;width:1px;height:31.25px;background:#e8e9eb;"></div>
<div style="position:absolute;left:1510.7px;top:81.35px;width:1px;height:31.25px;background:#e8e9eb;"></div>
<svg width="17.8" height="17.8" viewBox="0 0 18 18" style="position:absolute;left:19.9px;top:91.05px"><rect x="0.8" y="0.8" width="16.4" height="16.4" rx="3" fill="#fff" stroke="#c8c8c8" stroke-width="1.6"/></svg>
<div class="t" style="left:72.2px;top:85.05px;line-height:24px;letter-spacing:0.8px;">2026-02-03</div>
<div class="t" style="left:209.4px;top:85.05px;line-height:24px;letter-spacing:0.4px;">SO62030003</div>
<div class="t" style="left:434.7px;top:85.05px;line-height:24px;letter-spacing:0.55px;">青岛某某科技有限公司</div>
<div class="t" style="left:674.9px;top:85.05px;width:150px;text-align:center;line-height:24px;">2</div>
<div class="t" style="left:834.7px;top:85.05px;line-height:24px;letter-spacing:0.4px;">10000001</div>
<div class="t" style="left:984.7px;top:85.05px;line-height:24px;letter-spacing:0.55px;">鼠标</div>
<div class="t" style="left:1234.7px;top:85.05px;line-height:24px;">个</div>
<div class="t" style="left:1323.2px;top:85.05px;width:181px;text-align:right;line-height:24px;letter-spacing:0.4px;">100.0000</div>
<div style="position:absolute;left:0px;top:112.6px;width:1599.4px;height:31.25px;background:#ffffff;box-sizing:border-box;border-bottom:1px solid #e8e8e8;"></div>
<div style="position:absolute;left:60.7px;top:112.6px;width:1px;height:31.25px;background:#e8e9eb;"></div>
<div style="position:absolute;left:197.7px;top:112.6px;width:1px;height:31.25px;background:#e8e9eb;"></div>
<div style="position:absolute;left:422.7px;top:112.6px;width:1px;height:31.25px;background:#e8e9eb;"></div>
<div style="position:absolute;left:672.7px;top:112.6px;width:1px;height:31.25px;background:#e8e9eb;"></div>
<div style="position:absolute;left:822.7px;top:112.6px;width:1px;height:31.25px;background:#e8e9eb;"></div>
<div style="position:absolute;left:972.7px;top:112.6px;width:1px;height:31.25px;background:#e8e9eb;"></div>
<div style="position:absolute;left:1222.7px;top:112.6px;width:1px;height:31.25px;background:#e8e9eb;"></div>
<div style="position:absolute;left:1322.7px;top:112.6px;width:1px;height:31.25px;background:#e8e9eb;"></div>
<div style="position:absolute;left:1510.7px;top:112.6px;width:1px;height:31.25px;background:#e8e9eb;"></div>
<svg width="17.8" height="17.8" viewBox="0 0 18 18" style="position:absolute;left:19.9px;top:122.3px"><rect x="0.8" y="0.8" width="16.4" height="16.4" rx="3" fill="#fff" stroke="#c8c8c8" stroke-width="1.6"/></svg>
<div class="t" style="left:72.2px;top:116.3px;line-height:24px;letter-spacing:0.8px;">2026-02-03</div>
<div class="t" style="left:209.4px;top:116.3px;line-height:24px;letter-spacing:0.4px;">SO62030004</div>
<div class="t" style="left:434.7px;top:116.3px;line-height:24px;letter-spacing:0.55px;">青岛某某科技有限公司</div>
<div class="t" style="left:674.9px;top:116.3px;width:150px;text-align:center;line-height:24px;">1</div>
<div class="t" style="left:834.7px;top:116.3px;line-height:24px;letter-spacing:0.4px;">002</div>
<div class="t" style="left:984.7px;top:116.3px;line-height:24px;letter-spacing:0.55px;">键盘</div>
<div class="t" style="left:1234.7px;top:116.3px;line-height:24px;">个</div>
<div class="t" style="left:1323.2px;top:116.3px;width:181px;text-align:right;line-height:24px;letter-spacing:0.4px;">5.0000</div>
<div style="position:absolute;left:0px;top:143.85px;width:1599.4px;height:31.25px;background:#fafafa;box-sizing:border-box;border-bottom:1px solid #e8e8e8;"></div>
<div style="position:absolute;left:60.7px;top:143.85px;width:1px;height:31.25px;background:#e8e9eb;"></div>
<div style="position:absolute;left:197.7px;top:143.85px;width:1px;height:31.25px;background:#e8e9eb;"></div>
<div style="position:absolute;left:422.7px;top:143.85px;width:1px;height:31.25px;background:#e8e9eb;"></div>
<div style="position:absolute;left:672.7px;top:143.85px;width:1px;height:31.25px;background:#e8e9eb;"></div>
<div style="position:absolute;left:822.7px;top:143.85px;width:1px;height:31.25px;background:#e8e9eb;"></div>
<div style="position:absolute;left:972.7px;top:143.85px;width:1px;height:31.25px;background:#e8e9eb;"></div>
<div style="position:absolute;left:1222.7px;top:143.85px;width:1px;height:31.25px;background:#e8e9eb;"></div>
<div style="position:absolute;left:1322.7px;top:143.85px;width:1px;height:31.25px;background:#e8e9eb;"></div>
<div style="position:absolute;left:1510.7px;top:143.85px;width:1px;height:31.25px;background:#e8e9eb;"></div>
<svg width="17.8" height="17.8" viewBox="0 0 18 18" style="position:absolute;left:19.9px;top:153.55px"><rect x="0.8" y="0.8" width="16.4" height="16.4" rx="3" fill="#fff" stroke="#c8c8c8" stroke-width="1.6"/></svg>
<div class="t" style="left:72.2px;top:147.55px;line-height:24px;letter-spacing:0.8px;">2026-02-03</div>
<div class="t" style="left:209.4px;top:147.55px;line-height:24px;letter-spacing:0.4px;">SO62030004</div>
<div class="t" style="left:434.7px;top:147.55px;line-height:24px;letter-spacing:0.55px;">青岛某某科技有限公司</div>
<div class="t" style="left:674.9px;top:147.55px;width:150px;text-align:center;line-height:24px;">2</div>
<div class="t" style="left:834.7px;top:147.55px;line-height:24px;letter-spacing:0.4px;">004</div>
<div class="t" style="left:984.7px;top:147.55px;line-height:24px;letter-spacing:0.55px;">键盘</div>
<div class="t" style="left:1234.7px;top:147.55px;line-height:24px;">个</div>
<div class="t" style="left:1323.2px;top:147.55px;width:181px;text-align:right;line-height:24px;letter-spacing:0.4px;">5.0000</div>
<div style="position:absolute;left:0px;top:175.1px;width:1599.4px;height:31.25px;background:#ffffff;box-sizing:border-box;border-bottom:1px solid #e8e8e8;"></div>
<div style="position:absolute;left:60.7px;top:175.1px;width:1px;height:31.25px;background:#e8e9eb;"></div>
<div style="position:absolute;left:197.7px;top:175.1px;width:1px;height:31.25px;background:#e8e9eb;"></div>
<div style="position:absolute;left:422.7px;top:175.1px;width:1px;height:31.25px;background:#e8e9eb;"></div>
<div style="position:absolute;left:672.7px;top:175.1px;width:1px;height:31.25px;background:#e8e9eb;"></div>
<div style="position:absolute;left:822.7px;top:175.1px;width:1px;height:31.25px;background:#e8e9eb;"></div>
<div style="position:absolute;left:972.7px;top:175.1px;width:1px;height:31.25px;background:#e8e9eb;"></div>
<div style="position:absolute;left:1222.7px;top:175.1px;width:1px;height:31.25px;background:#e8e9eb;"></div>
<div style="position:absolute;left:1322.7px;top:175.1px;width:1px;height:31.25px;background:#e8e9eb;"></div>
<div style="position:absolute;left:1510.7px;top:175.1px;width:1px;height:31.25px;background:#e8e9eb;"></div>
<svg width="17.8" height="17.8" viewBox="0 0 18 18" style="position:absolute;left:19.9px;top:184.8px"><rect x="0.8" y="0.8" width="16.4" height="16.4" rx="3" fill="#fff" stroke="#c8c8c8" stroke-width="1.6"/></svg>
<div class="t" style="left:72.2px;top:178.8px;line-height:24px;letter-spacing:0.8px;">2026-02-03</div>
<div class="t" style="left:209.4px;top:178.8px;line-height:24px;letter-spacing:0.4px;">SO62030005</div>
<div class="t" style="left:434.7px;top:178.8px;line-height:24px;letter-spacing:0.55px;">青岛某某科技有限公司</div>
<div class="t" style="left:674.9px;top:178.8px;width:150px;text-align:center;line-height:24px;">1</div>
<div class="t" style="left:834.7px;top:178.8px;line-height:24px;letter-spacing:0.4px;">002</div>
<div class="t" style="left:984.7px;top:178.8px;line-height:24px;letter-spacing:0.55px;">键盘</div>
<div class="t" style="left:1234.7px;top:178.8px;line-height:24px;">个</div>
<div class="t" style="left:1323.2px;top:178.8px;width:181px;text-align:right;line-height:24px;letter-spacing:0.4px;">10.0000</div>
<div style="position:absolute;left:0px;top:206.35px;width:1599.4px;height:31.25px;background:#fafafa;box-sizing:border-box;border-bottom:1px solid #e8e8e8;"></div>
<div style="position:absolute;left:60.7px;top:206.35px;width:1px;height:31.25px;background:#e8e9eb;"></div>
<div style="position:absolute;left:197.7px;top:206.35px;width:1px;height:31.25px;background:#e8e9eb;"></div>
<div style="position:absolute;left:422.7px;top:206.35px;width:1px;height:31.25px;background:#e8e9eb;"></div>
<div style="position:absolute;left:672.7px;top:206.35px;width:1px;height:31.25px;background:#e8e9eb;"></div>
<div style="position:absolute;left:822.7px;top:206.35px;width:1px;height:31.25px;background:#e8e9eb;"></div>
<div style="position:absolute;left:972.7px;top:206.35px;width:1px;height:31.25px;background:#e8e9eb;"></div>
<div style="position:absolute;left:1222.7px;top:206.35px;width:1px;height:31.25px;background:#e8e9eb;"></div>
<div style="position:absolute;left:1322.7px;top:206.35px;width:1px;height:31.25px;background:#e8e9eb;"></div>
<div style="position:absolute;left:1510.7px;top:206.35px;width:1px;height:31.25px;background:#e8e9eb;"></div>
<svg width="17.8" height="17.8" viewBox="0 0 18 18" style="position:absolute;left:19.9px;top:216.05px"><rect x="0.8" y="0.8" width="16.4" height="16.4" rx="3" fill="#fff" stroke="#c8c8c8" stroke-width="1.6"/></svg>
<div class="t" style="left:72.2px;top:210.05px;line-height:24px;letter-spacing:0.8px;">2026-02-03</div>
<div class="t" style="left:209.4px;top:210.05px;line-height:24px;letter-spacing:0.4px;">SO62030005</div>
<div class="t" style="left:434.7px;top:210.05px;line-height:24px;letter-spacing:0.55px;">青岛某某科技有限公司</div>
<div class="t" style="left:674.9px;top:210.05px;width:150px;text-align:center;line-height:24px;">2</div>
<div class="t" style="left:834.7px;top:210.05px;line-height:24px;letter-spacing:0.4px;">10000001</div>
<div class="t" style="left:984.7px;top:210.05px;line-height:24px;letter-spacing:0.55px;">鼠标</div>
<div class="t" style="left:1234.7px;top:210.05px;line-height:24px;">个</div>
<div class="t" style="left:1323.2px;top:210.05px;width:181px;text-align:right;line-height:24px;letter-spacing:0.4px;">10.0000</div>
<div style="position:absolute;left:0px;top:237.6px;width:1599.4px;height:31.25px;background:#ffffff;box-sizing:border-box;border-bottom:1px solid #e8e8e8;"></div>
<div style="position:absolute;left:60.7px;top:237.6px;width:1px;height:31.25px;background:#e8e9eb;"></div>
<div style="position:absolute;left:197.7px;top:237.6px;width:1px;height:31.25px;background:#e8e9eb;"></div>
<div style="position:absolute;left:422.7px;top:237.6px;width:1px;height:31.25px;background:#e8e9eb;"></div>
<div style="position:absolute;left:672.7px;top:237.6px;width:1px;height:31.25px;background:#e8e9eb;"></div>
<div style="position:absolute;left:822.7px;top:237.6px;width:1px;height:31.25px;background:#e8e9eb;"></div>
<div style="position:absolute;left:972.7px;top:237.6px;width:1px;height:31.25px;background:#e8e9eb;"></div>
<div style="position:absolute;left:1222.7px;top:237.6px;width:1px;height:31.25px;background:#e8e9eb;"></div>
<div style="position:absolute;left:1322.7px;top:237.6px;width:1px;height:31.25px;background:#e8e9eb;"></div>
<div style="position:absolute;left:1510.7px;top:237.6px;width:1px;height:31.25px;background:#e8e9eb;"></div>
<svg width="17.8" height="17.8" viewBox="0 0 18 18" style="position:absolute;left:19.9px;top:247.3px"><rect x="0.8" y="0.8" width="16.4" height="16.4" rx="3" fill="#fff" stroke="#c8c8c8" stroke-width="1.6"/></svg>
<div class="t" style="left:72.2px;top:241.3px;line-height:24px;letter-spacing:0.8px;">2026-02-03</div>
<div class="t" style="left:209.4px;top:241.3px;line-height:24px;letter-spacing:0.4px;">SO62030006</div>
<div class="t" style="left:434.7px;top:241.3px;line-height:24px;letter-spacing:0.55px;">青岛某某科技有限公司</div>
<div class="t" style="left:674.9px;top:241.3px;width:150px;text-align:center;line-height:24px;">1</div>
<div class="t" style="left:834.7px;top:241.3px;line-height:24px;letter-spacing:0.4px;">002</div>
<div class="t" style="left:984.7px;top:241.3px;line-height:24px;letter-spacing:0.55px;">键盘</div>
<div class="t" style="left:1234.7px;top:241.3px;line-height:24px;">个</div>
<div class="t" style="left:1323.2px;top:241.3px;width:181px;text-align:right;line-height:24px;letter-spacing:0.4px;">10.0000</div>
<div style="position:absolute;left:0px;top:268.85px;width:1599.4px;height:31.25px;background:#fafafa;box-sizing:border-box;border-bottom:1px solid #e8e8e8;"></div>
<div style="position:absolute;left:60.7px;top:268.85px;width:1px;height:31.25px;background:#e8e9eb;"></div>
<div style="position:absolute;left:197.7px;top:268.85px;width:1px;height:31.25px;background:#e8e9eb;"></div>
<div style="position:absolute;left:422.7px;top:268.85px;width:1px;height:31.25px;background:#e8e9eb;"></div>
<div style="position:absolute;left:672.7px;top:268.85px;width:1px;height:31.25px;background:#e8e9eb;"></div>
<div style="position:absolute;left:822.7px;top:268.85px;width:1px;height:31.25px;background:#e8e9eb;"></div>
<div style="position:absolute;left:972.7px;top:268.85px;width:1px;height:31.25px;background:#e8e9eb;"></div>
<div style="position:absolute;left:1222.7px;top:268.85px;width:1px;height:31.25px;background:#e8e9eb;"></div>
<div style="position:absolute;left:1322.7px;top:268.85px;width:1px;height:31.25px;background:#e8e9eb;"></div>
<div style="position:absolute;left:1510.7px;top:268.85px;width:1px;height:31.25px;background:#e8e9eb;"></div>
<svg width="17.8" height="17.8" viewBox="0 0 18 18" style="position:absolute;left:19.9px;top:278.55px"><rect x="0.8" y="0.8" width="16.4" height="16.4" rx="3" fill="#fff" stroke="#c8c8c8" stroke-width="1.6"/></svg>
<div class="t" style="left:72.2px;top:272.55px;line-height:24px;letter-spacing:0.8px;">2026-02-25</div>
<div class="t" style="left:209.4px;top:272.55px;line-height:24px;letter-spacing:0.4px;">SB62250003</div>
<div class="t" style="left:434.7px;top:272.55px;line-height:24px;letter-spacing:0.55px;">青岛某某科技有限公司</div>
<div class="t" style="left:674.9px;top:272.55px;width:150px;text-align:center;line-height:24px;">1</div>
<div class="t" style="left:834.7px;top:272.55px;line-height:24px;letter-spacing:0.4px;">003</div>
<div class="t" style="left:984.7px;top:272.55px;line-height:24px;letter-spacing:0.4px;">PDA</div>
<div class="t" style="left:1234.7px;top:272.55px;line-height:24px;">台</div>
<div class="t" style="left:1323.2px;top:272.55px;width:181px;text-align:right;line-height:24px;letter-spacing:0.4px;">1.0000</div>
<div style="position:absolute;left:0px;top:300.1px;width:1599.4px;height:31.25px;background:#ffffff;box-sizing:border-box;border-bottom:1px solid #e8e8e8;"></div>
<div style="position:absolute;left:60.7px;top:300.1px;width:1px;height:31.25px;background:#e8e9eb;"></div>
<div style="position:absolute;left:197.7px;top:300.1px;width:1px;height:31.25px;background:#e8e9eb;"></div>
<div style="position:absolute;left:422.7px;top:300.1px;width:1px;height:31.25px;background:#e8e9eb;"></div>
<div style="position:absolute;left:672.7px;top:300.1px;width:1px;height:31.25px;background:#e8e9eb;"></div>
<div style="position:absolute;left:822.7px;top:300.1px;width:1px;height:31.25px;background:#e8e9eb;"></div>
<div style="position:absolute;left:972.7px;top:300.1px;width:1px;height:31.25px;background:#e8e9eb;"></div>
<div style="position:absolute;left:1222.7px;top:300.1px;width:1px;height:31.25px;background:#e8e9eb;"></div>
<div style="position:absolute;left:1322.7px;top:300.1px;width:1px;height:31.25px;background:#e8e9eb;"></div>
<div style="position:absolute;left:1510.7px;top:300.1px;width:1px;height:31.25px;background:#e8e9eb;"></div>
<svg width="17.8" height="17.8" viewBox="0 0 18 18" style="position:absolute;left:19.9px;top:309.8px"><rect x="0.8" y="0.8" width="16.4" height="16.4" rx="3" fill="#fff" stroke="#c8c8c8" stroke-width="1.6"/></svg>
<div class="t" style="left:72.2px;top:303.8px;line-height:24px;letter-spacing:0.8px;">2026-03-05</div>
<div class="t" style="left:209.4px;top:303.8px;line-height:24px;letter-spacing:0.4px;">SB63050004</div>
<div class="t" style="left:434.7px;top:303.8px;line-height:24px;letter-spacing:0.55px;">青岛某某科技有限公司</div>
<div class="t" style="left:674.9px;top:303.8px;width:150px;text-align:center;line-height:24px;">1</div>
<div class="t" style="left:834.7px;top:303.8px;line-height:24px;letter-spacing:0.4px;">002</div>
<div class="t" style="left:984.7px;top:303.8px;line-height:24px;letter-spacing:0.55px;">键盘</div>
<div class="t" style="left:1234.7px;top:303.8px;line-height:24px;">个</div>
<div class="t" style="left:1323.2px;top:303.8px;width:181px;text-align:right;line-height:24px;letter-spacing:0.4px;">2.0000</div>
<div style="position:absolute;left:0px;top:331.35px;width:1599.4px;height:31.25px;background:#fafafa;box-sizing:border-box;border-bottom:1px solid #e8e8e8;"></div>
<div style="position:absolute;left:60.7px;top:331.35px;width:1px;height:31.25px;background:#e8e9eb;"></div>
<div style="position:absolute;left:197.7px;top:331.35px;width:1px;height:31.25px;background:#e8e9eb;"></div>
<div style="position:absolute;left:422.7px;top:331.35px;width:1px;height:31.25px;background:#e8e9eb;"></div>
<div style="position:absolute;left:672.7px;top:331.35px;width:1px;height:31.25px;background:#e8e9eb;"></div>
<div style="position:absolute;left:822.7px;top:331.35px;width:1px;height:31.25px;background:#e8e9eb;"></div>
<div style="position:absolute;left:972.7px;top:331.35px;width:1px;height:31.25px;background:#e8e9eb;"></div>
<div style="position:absolute;left:1222.7px;top:331.35px;width:1px;height:31.25px;background:#e8e9eb;"></div>
<div style="position:absolute;left:1322.7px;top:331.35px;width:1px;height:31.25px;background:#e8e9eb;"></div>
<div style="position:absolute;left:1510.7px;top:331.35px;width:1px;height:31.25px;background:#e8e9eb;"></div>
<svg width="17.8" height="17.8" viewBox="0 0 18 18" style="position:absolute;left:19.9px;top:341.05px"><rect x="0.8" y="0.8" width="16.4" height="16.4" rx="3" fill="#fff" stroke="#c8c8c8" stroke-width="1.6"/></svg>
<div class="t" style="left:72.2px;top:335.05px;line-height:24px;letter-spacing:0.8px;">2026-03-05</div>
<div class="t" style="left:209.4px;top:335.05px;line-height:24px;letter-spacing:0.4px;">SB63050004</div>
<div class="t" style="left:434.7px;top:335.05px;line-height:24px;letter-spacing:0.55px;">青岛某某科技有限公司</div>
<div class="t" style="left:674.9px;top:335.05px;width:150px;text-align:center;line-height:24px;">2</div>
<div class="t" style="left:834.7px;top:335.05px;line-height:24px;letter-spacing:0.4px;">004</div>
<div class="t" style="left:984.7px;top:335.05px;line-height:24px;letter-spacing:0.55px;">键盘</div>
<div class="t" style="left:1234.7px;top:335.05px;line-height:24px;">个</div>
<div class="t" style="left:1323.2px;top:335.05px;width:181px;text-align:right;line-height:24px;letter-spacing:0.4px;">3.0000</div>
<div style="position:absolute;left:0px;top:362.6px;width:1599.4px;height:31.25px;background:#ffffff;box-sizing:border-box;border-bottom:1px solid #e8e8e8;"></div>
<div style="position:absolute;left:60.7px;top:362.6px;width:1px;height:31.25px;background:#e8e9eb;"></div>
<div style="position:absolute;left:197.7px;top:362.6px;width:1px;height:31.25px;background:#e8e9eb;"></div>
<div style="position:absolute;left:422.7px;top:362.6px;width:1px;height:31.25px;background:#e8e9eb;"></div>
<div style="position:absolute;left:672.7px;top:362.6px;width:1px;height:31.25px;background:#e8e9eb;"></div>
<div style="position:absolute;left:822.7px;top:362.6px;width:1px;height:31.25px;background:#e8e9eb;"></div>
<div style="position:absolute;left:972.7px;top:362.6px;width:1px;height:31.25px;background:#e8e9eb;"></div>
<div style="position:absolute;left:1222.7px;top:362.6px;width:1px;height:31.25px;background:#e8e9eb;"></div>
<div style="position:absolute;left:1322.7px;top:362.6px;width:1px;height:31.25px;background:#e8e9eb;"></div>
<div style="position:absolute;left:1510.7px;top:362.6px;width:1px;height:31.25px;background:#e8e9eb;"></div>
<svg width="17.8" height="17.8" viewBox="0 0 18 18" style="position:absolute;left:19.9px;top:372.3px"><rect x="0.8" y="0.8" width="16.4" height="16.4" rx="3" fill="#fff" stroke="#c8c8c8" stroke-width="1.6"/></svg>
<div class="t" style="left:72.2px;top:366.3px;line-height:24px;letter-spacing:0.8px;">2026-03-05</div>
<div class="t" style="left:209.4px;top:366.3px;line-height:24px;letter-spacing:0.4px;">SB63050005</div>
<div class="t" style="left:434.7px;top:366.3px;line-height:24px;letter-spacing:0.55px;">青岛某某科技有限公司</div>
<div class="t" style="left:674.9px;top:366.3px;width:150px;text-align:center;line-height:24px;">1</div>
<div class="t" style="left:834.7px;top:366.3px;line-height:24px;letter-spacing:0.4px;">002</div>
<div class="t" style="left:984.7px;top:366.3px;line-height:24px;letter-spacing:0.55px;">键盘</div>
<div class="t" style="left:1234.7px;top:366.3px;line-height:24px;">个</div>
<div class="t" style="left:1323.2px;top:366.3px;width:181px;text-align:right;line-height:24px;letter-spacing:0.4px;">5.0000</div>
<div style="position:absolute;left:0px;top:393.85px;width:1599.4px;height:31.25px;background:#fafafa;box-sizing:border-box;border-bottom:1px solid #e8e8e8;"></div>
<div style="position:absolute;left:60.7px;top:393.85px;width:1px;height:31.25px;background:#e8e9eb;"></div>
<div style="position:absolute;left:197.7px;top:393.85px;width:1px;height:31.25px;background:#e8e9eb;"></div>
<div style="position:absolute;left:422.7px;top:393.85px;width:1px;height:31.25px;background:#e8e9eb;"></div>
<div style="position:absolute;left:672.7px;top:393.85px;width:1px;height:31.25px;background:#e8e9eb;"></div>
<div style="position:absolute;left:822.7px;top:393.85px;width:1px;height:31.25px;background:#e8e9eb;"></div>
<div style="position:absolute;left:972.7px;top:393.85px;width:1px;height:31.25px;background:#e8e9eb;"></div>
<div style="position:absolute;left:1222.7px;top:393.85px;width:1px;height:31.25px;background:#e8e9eb;"></div>
<div style="position:absolute;left:1322.7px;top:393.85px;width:1px;height:31.25px;background:#e8e9eb;"></div>
<div style="position:absolute;left:1510.7px;top:393.85px;width:1px;height:31.25px;background:#e8e9eb;"></div>
<svg width="17.8" height="17.8" viewBox="0 0 18 18" style="position:absolute;left:19.9px;top:403.55px"><rect x="0.8" y="0.8" width="16.4" height="16.4" rx="3" fill="#fff" stroke="#c8c8c8" stroke-width="1.6"/></svg>
<div class="t" style="left:72.2px;top:397.55px;line-height:24px;letter-spacing:0.8px;">2026-03-05</div>
<div class="t" style="left:209.4px;top:397.55px;line-height:24px;letter-spacing:0.4px;">SB63050005</div>
<div class="t" style="left:434.7px;top:397.55px;line-height:24px;letter-spacing:0.55px;">青岛某某科技有限公司</div>
<div class="t" style="left:674.9px;top:397.55px;width:150px;text-align:center;line-height:24px;">2</div>
<div class="t" style="left:834.7px;top:397.55px;line-height:24px;letter-spacing:0.4px;">004</div>
<div class="t" style="left:984.7px;top:397.55px;line-height:24px;letter-spacing:0.55px;">键盘</div>
<div class="t" style="left:1234.7px;top:397.55px;line-height:24px;">个</div>
<div class="t" style="left:1323.2px;top:397.55px;width:181px;text-align:right;line-height:24px;letter-spacing:0.4px;">5.0000</div>
<div style="position:absolute;left:0px;top:425.1px;width:1599.4px;height:31.25px;background:#9ce2d0;box-sizing:border-box;border-bottom:1px solid #e8e8e8;"></div>
<div style="position:absolute;left:60.7px;top:425.1px;width:1px;height:31.25px;background:#e8e9eb;"></div>
<div style="position:absolute;left:197.7px;top:425.1px;width:1px;height:31.25px;background:#e8e9eb;"></div>
<div style="position:absolute;left:422.7px;top:425.1px;width:1px;height:31.25px;background:#e8e9eb;"></div>
<div style="position:absolute;left:672.7px;top:425.1px;width:1px;height:31.25px;background:#e8e9eb;"></div>
<div style="position:absolute;left:822.7px;top:425.1px;width:1px;height:31.25px;background:#e8e9eb;"></div>
<div style="position:absolute;left:972.7px;top:425.1px;width:1px;height:31.25px;background:#e8e9eb;"></div>
<div style="position:absolute;left:1222.7px;top:425.1px;width:1px;height:31.25px;background:#e8e9eb;"></div>
<div style="position:absolute;left:1322.7px;top:425.1px;width:1px;height:31.25px;background:#e8e9eb;"></div>
<div style="position:absolute;left:1510.7px;top:425.1px;width:1px;height:31.25px;background:#e8e9eb;"></div>
<svg width="18.6" height="18.6" viewBox="0 0 18 18" style="position:absolute;left:19.5px;top:433.3px"><rect x="0" y="0" width="18" height="18" rx="3" fill="#0cb58a"/><path d="M5 9.3 L7.8 11.8 L13 6.4" fill="none" stroke="rgba(255,255,255,0.85)" stroke-width="1.1"/></svg>
<div class="t" style="left:72.2px;top:428.8px;line-height:24px;letter-spacing:0.8px;">2026-03-30</div>
<div class="t" style="left:209.4px;top:428.8px;line-height:24px;letter-spacing:0.4px;">SO63300012</div>
<div class="t" style="left:434.7px;top:428.8px;line-height:24px;letter-spacing:0.55px;">青岛某某科技有限公司</div>
<div class="t" style="left:674.9px;top:428.8px;width:150px;text-align:center;line-height:24px;">1</div>
<div class="t" style="left:834.7px;top:428.8px;line-height:24px;letter-spacing:0.4px;">003</div>
<div class="t" style="left:984.7px;top:428.8px;line-height:24px;letter-spacing:0.4px;">PDA</div>
<div class="t" style="left:1234.7px;top:428.8px;line-height:24px;">台</div>
<div class="t" style="left:1323.2px;top:428.8px;width:181px;text-align:right;line-height:24px;letter-spacing:0.4px;">1.0000</div>
<div style="position:absolute;left:0px;top:0px;width:1615.1000000000001px;height:31.6px;background:#e9eded;"></div>
<div style="position:absolute;left:60.7px;top:2.8px;width:1px;height:28.8px;background:#ccd2e0;"></div>
<div style="position:absolute;left:197.7px;top:2.8px;width:1px;height:28.8px;background:#ccd2e0;"></div>
<div style="position:absolute;left:422.7px;top:2.8px;width:1px;height:28.8px;background:#ccd2e0;"></div>
<div style="position:absolute;left:672.7px;top:2.8px;width:1px;height:28.8px;background:#ccd2e0;"></div>
<div style="position:absolute;left:822.7px;top:2.8px;width:1px;height:28.8px;background:#ccd2e0;"></div>
<div style="position:absolute;left:972.7px;top:2.8px;width:1px;height:28.8px;background:#ccd2e0;"></div>
<div style="position:absolute;left:1222.7px;top:2.8px;width:1px;height:28.8px;background:#ccd2e0;"></div>
<div style="position:absolute;left:1322.7px;top:2.8px;width:1px;height:28.8px;background:#ccd2e0;"></div>
<div style="position:absolute;left:1510.7px;top:2.8px;width:1px;height:28.8px;background:#ccd2e0;"></div>
<div style="position:absolute;left:1599.4px;top:2.8px;width:1px;height:28.8px;background:#ccd2e0;"></div>
<div style="position:absolute;left:1599.4px;top:0px;width:15.700000000000045px;height:31.6px;background:#f6f8f8;"></div>
<svg width="18.5" height="18.5" viewBox="0 0 18 18" style="position:absolute;left:18.7px;top:9.2px"><rect x="0" y="0" width="18" height="18" rx="3" fill="#0cb58a"/><path d="M5 9 H13" stroke="#fff" stroke-width="1.4"/></svg>
<div class="t" style="left:68.0px;top:4.8px;line-height:24px;">转入单...</div>
<svg width="13.5" height="19" viewBox="0 0 13.5 19" style="position:absolute;left:151.9px;top:6.0px"><path d="M6.75 0 L13.2 7.6 L0.3 7.6Z M0.3 11 L13.2 11 L6.75 18.8Z" fill="#c3c7d1"/></svg>
<svg width="16" height="16" viewBox="0 0 16 16" style="position:absolute;left:173.7px;top:8.1px"><path d="M0.5 1 L15.5 1 L15.5 3 L10 8.5 L10 15.5 L6 12.5 L6 8.5 L0.5 3Z" fill="#c3c7d1"/></svg>
<div class="t" style="left:255.5px;top:4.8px;line-height:24px;">转入单号</div>
<svg width="13.5" height="19" viewBox="0 0 13.5 19" style="position:absolute;left:326.2px;top:6.0px"><path d="M6.75 0 L13.2 7.6 L0.3 7.6Z M0.3 11 L13.2 11 L6.75 18.8Z" fill="#c3c7d1"/></svg>
<svg width="16" height="16" viewBox="0 0 16 16" style="position:absolute;left:348.7px;top:8.1px"><path d="M0.5 1 L15.5 1 L15.5 3 L10 8.5 L10 15.5 L6 12.5 L6 8.5 L0.5 3Z" fill="#c3c7d1"/></svg>
<div class="t" style="left:492.90000000000003px;top:4.8px;line-height:24px;">客户名称</div>
<svg width="13.5" height="19" viewBox="0 0 13.5 19" style="position:absolute;left:564.2px;top:6.0px"><path d="M6.75 0 L13.2 7.6 L0.3 7.6Z M0.3 11 L13.2 11 L6.75 18.8Z" fill="#c3c7d1"/></svg>
<svg width="16" height="16" viewBox="0 0 16 16" style="position:absolute;left:587.1px;top:8.1px"><path d="M0.5 1 L15.5 1 L15.5 3 L10 8.5 L10 15.5 L6 12.5 L6 8.5 L0.5 3Z" fill="#c3c7d1"/></svg>
<div class="t" style="left:684.8px;top:4.8px;line-height:24px;">转入单项次</div>
<svg width="13.5" height="19" viewBox="0 0 13.5 19" style="position:absolute;left:772.6px;top:6.0px"><path d="M6.75 0 L13.2 7.6 L0.3 7.6Z M0.3 11 L13.2 11 L6.75 18.8Z" fill="#c3c7d1"/></svg>
<svg width="16" height="16" viewBox="0 0 16 16" style="position:absolute;left:795.7px;top:8.1px"><path d="M0.5 1 L15.5 1 L15.5 3 L10 8.5 L10 15.5 L6 12.5 L6 8.5 L0.5 3Z" fill="#c3c7d1"/></svg>
<div class="t" style="left:843.0px;top:4.8px;line-height:24px;">货品代号</div>
<svg width="13.5" height="19" viewBox="0 0 13.5 19" style="position:absolute;left:913.8px;top:6.0px"><path d="M6.75 0 L13.2 7.6 L0.3 7.6Z M0.3 11 L13.2 11 L6.75 18.8Z" fill="#c3c7d1"/></svg>
<svg width="16" height="16" viewBox="0 0 16 16" style="position:absolute;left:936.3px;top:8.1px"><path d="M0.5 1 L15.5 1 L15.5 3 L10 8.5 L10 15.5 L6 12.5 L6 8.5 L0.5 3Z" fill="#c3c7d1"/></svg>
<div class="t" style="left:1043.1px;top:4.8px;line-height:24px;">货品名称</div>
<svg width="13.5" height="19" viewBox="0 0 13.5 19" style="position:absolute;left:1114.2px;top:6.0px"><path d="M6.75 0 L13.2 7.6 L0.3 7.6Z M0.3 11 L13.2 11 L6.75 18.8Z" fill="#c3c7d1"/></svg>
<svg width="16" height="16" viewBox="0 0 16 16" style="position:absolute;left:1136.7px;top:8.1px"><path d="M0.5 1 L15.5 1 L15.5 3 L10 8.5 L10 15.5 L6 12.5 L6 8.5 L0.5 3Z" fill="#c3c7d1"/></svg>
<div class="t" style="left:1234.3999999999999px;top:4.8px;line-height:24px;">单位</div>
<svg width="13.5" height="19" viewBox="0 0 13.5 19" style="position:absolute;left:1273.2px;top:6.0px"><path d="M6.75 0 L13.2 7.6 L0.3 7.6Z M0.3 11 L13.2 11 L6.75 18.8Z" fill="#c3c7d1"/></svg>
<svg width="16" height="16" viewBox="0 0 16 16" style="position:absolute;left:1295.1px;top:8.1px"><path d="M0.5 1 L15.5 1 L15.5 3 L10 8.5 L10 15.5 L6 12.5 L6 8.5 L0.5 3Z" fill="#c3c7d1"/></svg>
<div class="t" style="left:1361.1px;top:4.8px;line-height:24px;">原单数量</div>
<svg width="13.5" height="19" viewBox="0 0 13.5 19" style="position:absolute;left:1432.7px;top:6.0px"><path d="M6.75 0 L13.2 7.6 L0.3 7.6Z M0.3 11 L13.2 11 L6.75 18.8Z" fill="#c3c7d1"/></svg>
<svg width="16" height="16" viewBox="0 0 16 16" style="position:absolute;left:1454.5px;top:8.1px"><path d="M0.5 1 L15.5 1 L15.5 3 L10 8.5 L10 15.5 L6 12.5 L6 8.5 L0.5 3Z" fill="#c3c7d1"/></svg>
<div class="t" style="left:1548.7px;top:4.8px;line-height:24px;">预转数</div>
<div style="position:absolute;left:0px;top:31.6px;width:1px;height:469.0px;background:#e6e9ec;"></div>
<div style="position:absolute;left:0px;top:454.8px;width:1599.4px;height:29.5px;background:#dde4e3;"></div>
<div style="position:absolute;left:60.7px;top:454.8px;width:1px;height:29.5px;background:#eef1f1;"></div>
<div style="position:absolute;left:197.7px;top:454.8px;width:1px;height:29.5px;background:#eef1f1;"></div>
<div style="position:absolute;left:422.7px;top:454.8px;width:1px;height:29.5px;background:#eef1f1;"></div>
<div style="position:absolute;left:672.7px;top:454.8px;width:1px;height:29.5px;background:#eef1f1;"></div>
<div style="position:absolute;left:822.7px;top:454.8px;width:1px;height:29.5px;background:#eef1f1;"></div>
<div style="position:absolute;left:972.7px;top:454.8px;width:1px;height:29.5px;background:#eef1f1;"></div>
<div style="position:absolute;left:1222.7px;top:454.8px;width:1px;height:29.5px;background:#eef1f1;"></div>
<div style="position:absolute;left:1322.7px;top:454.8px;width:1px;height:29.5px;background:#eef1f1;"></div>
<div style="position:absolute;left:1510.7px;top:454.8px;width:1px;height:29.5px;background:#eef1f1;"></div>
<div class="t" style="left:13.7px;top:458.8px;line-height:24px;font-weight:bold;-webkit-text-stroke:0;">合计</div>
<div style="position:absolute;left:0px;top:453.6px;width:1599.4px;height:1.2px;background:#e8e8e8;"></div>
<div style="position:absolute;left:0px;top:484.3px;width:1615.1000000000001px;height:1.3px;background:#fff;"></div>
<div style="position:absolute;left:0px;top:485.6px;width:1599.4px;height:13.4px;background:#dde4e3;"></div>
<div style="position:absolute;left:0px;top:499.0px;width:1615.1000000000001px;height:1.6px;background:#e6e9ea;"></div>
<svg width="8" height="12" style="position:absolute;left:8.7px;top:486.6px"><path d="M7.5 0 L0 6 L7.5 12Z" fill="#8a8e95"/></svg>
<div style="position:absolute;left:24.7px;top:485.6px;width:657px;height:13.4px;background:#84d9c5;border-radius:7px;"></div>
<svg width="8" height="12" style="position:absolute;left:1583.7px;top:486.6px"><path d="M0 0 L7.5 6 L0 12Z" fill="#8a8e95"/></svg>
<div style="position:absolute;left:1599.4px;top:31.1px;width:15.7px;height:420.7px;background:#dde4e3;"></div>
<svg width="12" height="11" style="position:absolute;left:1602.7px;top:35.8px"><path d="M6 0 L11.5 10.5 L0.5 10.5Z" fill="#8a8e95"/></svg>
<div style="position:absolute;left:1599.4px;top:127.8px;width:15.7px;height:309.29999999999995px;background:#84d9c5;border-radius:8px;"></div>
<svg width="12" height="11" style="position:absolute;left:1603.2px;top:441.8px"><path d="M0.5 0.5 L11.5 0.5 L6 10.5Z" fill="#8a8e95"/></svg>
<div style="position:absolute;left:1599.4px;top:451.8px;width:15.7px;height:48.80000000000001px;box-sizing:border-box;border:1px solid #e6e9ea;background:#fff;"></div>
</div>
<div style="position:absolute;left:136px;top:784.2px;width:1642px;height:1px;background:#dcdfe6;"></div>
<div style="position:absolute;left:149.3px;top:797.1px;width:213.2px;height:28.600000000000023px;box-sizing:border-box;border:1px solid #c4c4c4;border-radius:4px;background:#fff;"></div><div class="t" style="left:152.60000000000002px;top:797.8000000000001px;line-height:28.600000000000023px;font-size:16.25px;">覆盖当前记录</div><svg width="17" height="9" viewBox="0 0 17 9" style="position:absolute;left:337.3px;top:806.9000000000001px"><path d="M0.8 0.8 L8.5 8.2 L16.2 0.8" fill="none" stroke="#333" stroke-width="1.4"/></svg>
<div style="position:absolute;left:1621px;top:797.1px;width:64.6px;height:34.7px;box-sizing:border-box;border:1px solid #0cb58a;border-radius:5px;background:#fff;"></div>
<div class="t" style="left:1637.5px;top:803px;line-height:22px;color:#0cb58a;">关闭</div>
<div style="position:absolute;left:1701px;top:797.1px;width:64.1px;height:34.7px;background:#0cb58a;border-radius:5px;"></div>
<div class="t" style="left:1717px;top:803px;line-height:22px;color:#fff;-webkit-text-stroke:0.45px #fff;">确定</div>
<div style="position:absolute;left:155.1px;top:686.3px;width:319.7px;height:50.4px;box-sizing:border-box;border:4px solid #f44e50;border-radius:3px;"></div>
<div style="position:absolute;left:1694px;top:784.5px;width:78px;height:58.5px;box-sizing:border-box;border:4px solid #f44e50;border-radius:3px;"></div>
<div class="t" style="left:1627px;top:768.5px;font-size:20.5px;line-height:26px;letter-spacing:0;-webkit-text-stroke:0;color:rgba(160,160,160,0.85);">激活 Windows</div>
<div class="t" style="left:1627px;top:796px;font-size:15px;line-height:20px;letter-spacing:0;-webkit-text-stroke:0;color:rgba(160,160,160,0.85);">转到“设置”以激活 Windows。</div>
</body></html>
